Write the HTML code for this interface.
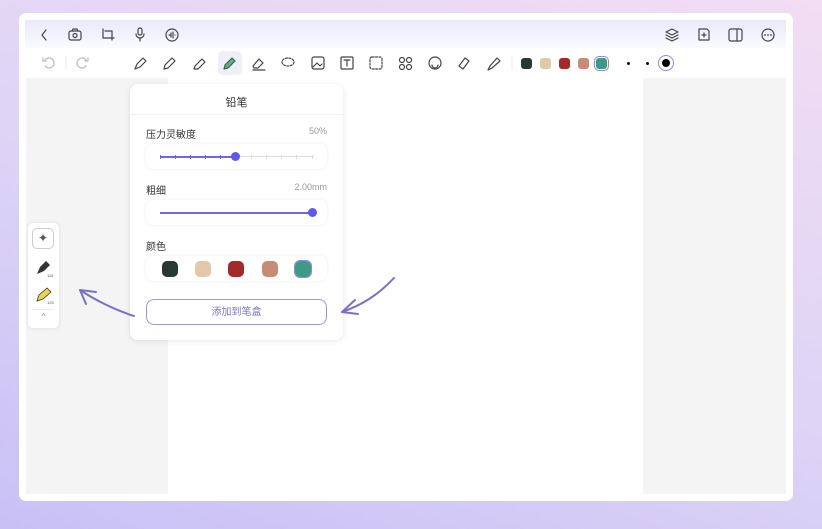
<!DOCTYPE html>
<html><head><meta charset="utf-8"><style>
*{margin:0;padding:0;box-sizing:border-box}
body{width:822px;height:529px;overflow:hidden;position:relative;font-family:"Liberation Sans","Noto Sans CJK SC",sans-serif;background:linear-gradient(20deg,#c9c0f6 0%,#dcd3f6 45%,#f2ddf3 100%)}
.frame{position:absolute;left:19px;top:13px;width:774px;height:488px;background:#fff;border-radius:7px}
.head{position:absolute;left:25px;top:20px;width:761px;height:28px;background:linear-gradient(#e9e9fb,#fafaff)}
.tool{position:absolute;left:25px;top:48px;width:761px;height:30px;background:#fff}
.gray{position:absolute;left:26px;top:78px;width:760px;height:416px;background:#f4f4f4}
.page{position:absolute;left:168px;top:78px;width:475px;height:416px;background:#fff}
svg.i{position:absolute}
.sw{position:absolute;width:11px;height:11px;border-radius:3px}
.pop{position:absolute;left:130px;top:84px;width:213px;height:256px;background:#fff;border-radius:8px;box-shadow:0 1px 6px rgba(0,0,0,.1)}
.t{position:absolute;font-size:10px;color:#333}
.box{position:absolute;left:16px;width:181px;height:25px;border-radius:7px;box-shadow:0 0 3px rgba(0,0,0,.08);background:#fff}
.btn{position:absolute;left:16px;top:215px;width:181px;height:26px;border:1.5px solid #9e97de;border-radius:8px;text-align:center;line-height:25px;font-size:10px;color:#7b72d6}
.side{position:absolute;left:28px;top:223px;width:31px;height:105px;background:#fff;border-radius:5px;box-shadow:0 0 4px rgba(0,0,0,.1)}
.tk{position:absolute;top:71px;width:1px;height:4px;background:#6f66e0}
</style></head><body>
<div class="frame"></div>
<div class="head"></div>
<div class="tool"></div>
<div class="gray"></div>
<div class="page"></div>
<svg class="i" style="left:0;top:0" width="822" height="529" fill="none" stroke="#444" stroke-width="1.2" stroke-linecap="round" stroke-linejoin="round">
<path d="M46 30l-4 5 4 5"/>
<rect x="69" y="31" width="12" height="9" rx="2"/><circle cx="75" cy="35.5" r="2"/><path d="M72 31l1-2h4l1 2"/>
<path d="M103 29v9h11M105 31h7v9"/>
<rect x="138" y="28" width="4" height="7" rx="2"/><path d="M136 34a4 4 0 008 0M140 38v3"/>
<circle cx="172" cy="35" r="6"/><path d="M169 35h1M171 33v4M173 32v6M175 35h0"/>
<path d="M666 32l6-3 6 3-6 3zM666 35l6 3 6-3M666 38l6 3 6-3"/>
<path d="M699 29h8l2 2v9h-10z"/><path d="M704 33v4M702 35h4"/>
<rect x="729" y="29" width="13" height="12" rx="2"/><path d="M737 29v12"/>
<circle cx="768" cy="35" r="6"/><path d="M765 35h0M768 35h0M771 35h0" stroke-width="1.8"/>
<path d="M45 60a5 5 0 110 6" stroke="#bbb"/><path d="M43 58v3h3" stroke="#bbb"/>
<path d="M86 60a5 5 0 100 6" stroke="#bbb"/><path d="M88 58v3h-3" stroke="#bbb"/>
<path d="M66 57v12" stroke="#eee"/>
<path d="M135 69l2-5 6-6 3 3-6 6z"/><path d="M164 69l1-4 7-7 3 3-7 7z"/><path d="M194 69l1-3 7-7 3 3-7 7z"/>
<rect x="218" y="51" width="24" height="24" rx="5" fill="#efeff7" stroke="none"/>
<path d="M224 69l1-4 7-7 3 3-7 7z" stroke="#2d6b4e" fill="#6aaa84"/>
<path d="M253 66l6-7 4 4-5 5h-4zM253 70h12"/>
<ellipse cx="288" cy="62" rx="6" ry="4" stroke-dasharray="2 1.5"/>
<rect x="312" y="57" width="12" height="12" rx="2"/><path d="M313 67l4-4 3 3 2-2"/>
<rect x="341" y="57" width="12" height="12" rx="1"/><path d="M344 60h6M347 60v6"/>
<rect x="370" y="57" width="12" height="12" rx="2" stroke-dasharray="2 1.5"/>
<circle cx="402" cy="60" r="2.5"/><circle cx="409" cy="60" r="2.5"/><circle cx="402" cy="67" r="2.5"/><circle cx="409" cy="67" r="2.5"/>
<circle cx="435" cy="63" r="6"/><path d="M432 65a3 3 0 006 0"/>
<path d="M459 66l6-8 4 3-6 8z"/><path d="M488 70l2-4 7-8 3 3-8 7z"/>
<path d="M608 56v14" stroke="#eee"/><path d="M512 56v14" stroke="#eee"/>
</svg>
<div class="sw" style="left:521px;top:58px;background:#263a33"></div>
<div class="sw" style="left:540px;top:58px;background:#e2c8a8"></div>
<div class="sw" style="left:559px;top:58px;background:#a22a2a"></div>
<div class="sw" style="left:578px;top:58px;background:#c78c73"></div>
<div class="sw" style="left:596px;top:58px;background:#3d9a83;outline:1.5px solid #8f88e5;outline-offset:1px"></div>
<div style="position:absolute;left:627px;top:62px;width:3px;height:3px;border-radius:50%;background:#111"></div>
<div style="position:absolute;left:646px;top:62px;width:3px;height:3px;border-radius:50%;background:#111"></div>
<div style="position:absolute;left:658px;top:55px;width:16px;height:16px;border-radius:50%;border:1.5px solid #8f88e5"></div>
<div style="position:absolute;left:662px;top:59px;width:8px;height:8px;border-radius:50%;background:#000"></div>

<div class="pop">
<div class="t" style="left:0;width:213px;text-align:center;top:10px;font-size:11px">铅笔</div>
<div style="position:absolute;left:0;top:30px;width:213px;height:1px;background:#f0f0f0"></div>
<div class="t" style="left:16px;top:42px">压力灵敏度</div>
<div class="t" style="right:16px;top:42px;color:#999;font-size:9px">50%</div>
<div class="box" style="top:60px"></div>
<div style="position:absolute;left:30px;top:72px;width:76px;height:2px;background:#6f66e0"></div>
<div style="position:absolute;left:106px;top:72px;width:78px;height:1px;background:#ddd"></div>
<div class="tk" style="left:30px"></div><div class="tk" style="left:45px"></div><div class="tk" style="left:60px"></div><div class="tk" style="left:75px"></div><div class="tk" style="left:90px"></div>
<div class="tk" style="left:121px;background:#ddd"></div><div class="tk" style="left:136px;background:#ddd"></div><div class="tk" style="left:151px;background:#ddd"></div><div class="tk" style="left:166px;background:#ddd"></div><div class="tk" style="left:182px;background:#ddd"></div>
<div style="position:absolute;left:101px;top:68px;width:9px;height:9px;border-radius:50%;background:#5f57ee"></div>
<div class="t" style="left:16px;top:98px">粗细</div>
<div class="t" style="right:16px;top:98px;color:#999;font-size:9px">2.00mm</div>
<div class="box" style="top:116px"></div>
<div style="position:absolute;left:30px;top:128px;width:152px;height:2px;background:#6f66e0"></div>
<div style="position:absolute;left:178px;top:124px;width:9px;height:9px;border-radius:50%;background:#5f57ee"></div>
<div class="t" style="left:16px;top:154px">颜色</div>
<div class="box" style="top:172px"></div>
<div class="sw" style="left:32px;top:177px;width:16px;height:16px;background:#263a33;border-radius:5px"></div>
<div class="sw" style="left:65px;top:177px;width:16px;height:16px;background:#e2c8a8;border-radius:5px"></div>
<div class="sw" style="left:98px;top:177px;width:16px;height:16px;background:#a22a2a;border-radius:5px"></div>
<div class="sw" style="left:132px;top:177px;width:16px;height:16px;background:#c78c73;border-radius:5px"></div>
<div class="sw" style="left:165px;top:177px;width:16px;height:16px;background:#3d9a83;border-radius:5px;outline:1.5px solid #8f88e5"></div>
<div class="btn">添加到笔盒</div>
</div>

<div class="side">
<div style="position:absolute;left:4px;top:5px;width:22px;height:21px;border:1px solid #ccc;border-radius:5px;text-align:center;line-height:19px;font-size:12px;color:#555">✦</div>
<svg style="position:absolute;left:6px;top:35px" width="20" height="20"><path d="M3 16l3-7 6-6 4 4-6 6z" fill="#333"/><text x="13" y="19" font-size="4" fill="#555">115</text></svg>
<svg style="position:absolute;left:6px;top:62px" width="20" height="20"><path d="M3 16l2-6 8-7 4 4-8 7z" fill="#f2d24a" stroke="#333" stroke-width=".8"/><text x="13" y="19" font-size="4" fill="#555">125</text></svg>
<div style="position:absolute;left:4px;top:86px;width:22px;height:1px;background:#eee"></div>
<div style="position:absolute;left:0;width:31px;top:89px;text-align:center;font-size:8px;color:#888">^</div>
</div>

<svg class="i" style="left:0;top:0" width="822" height="529" fill="none" stroke="#7a70c8" stroke-width="2" stroke-linecap="round">
<path d="M134 316C115 310 95 300 80 290"/><path d="M80 290l16 2M80 290l6 14"/>
<path d="M394 278C378 295 362 305 342 312"/><path d="M342 312l13-12M342 312l16 2"/>
</svg>
</body></html>
